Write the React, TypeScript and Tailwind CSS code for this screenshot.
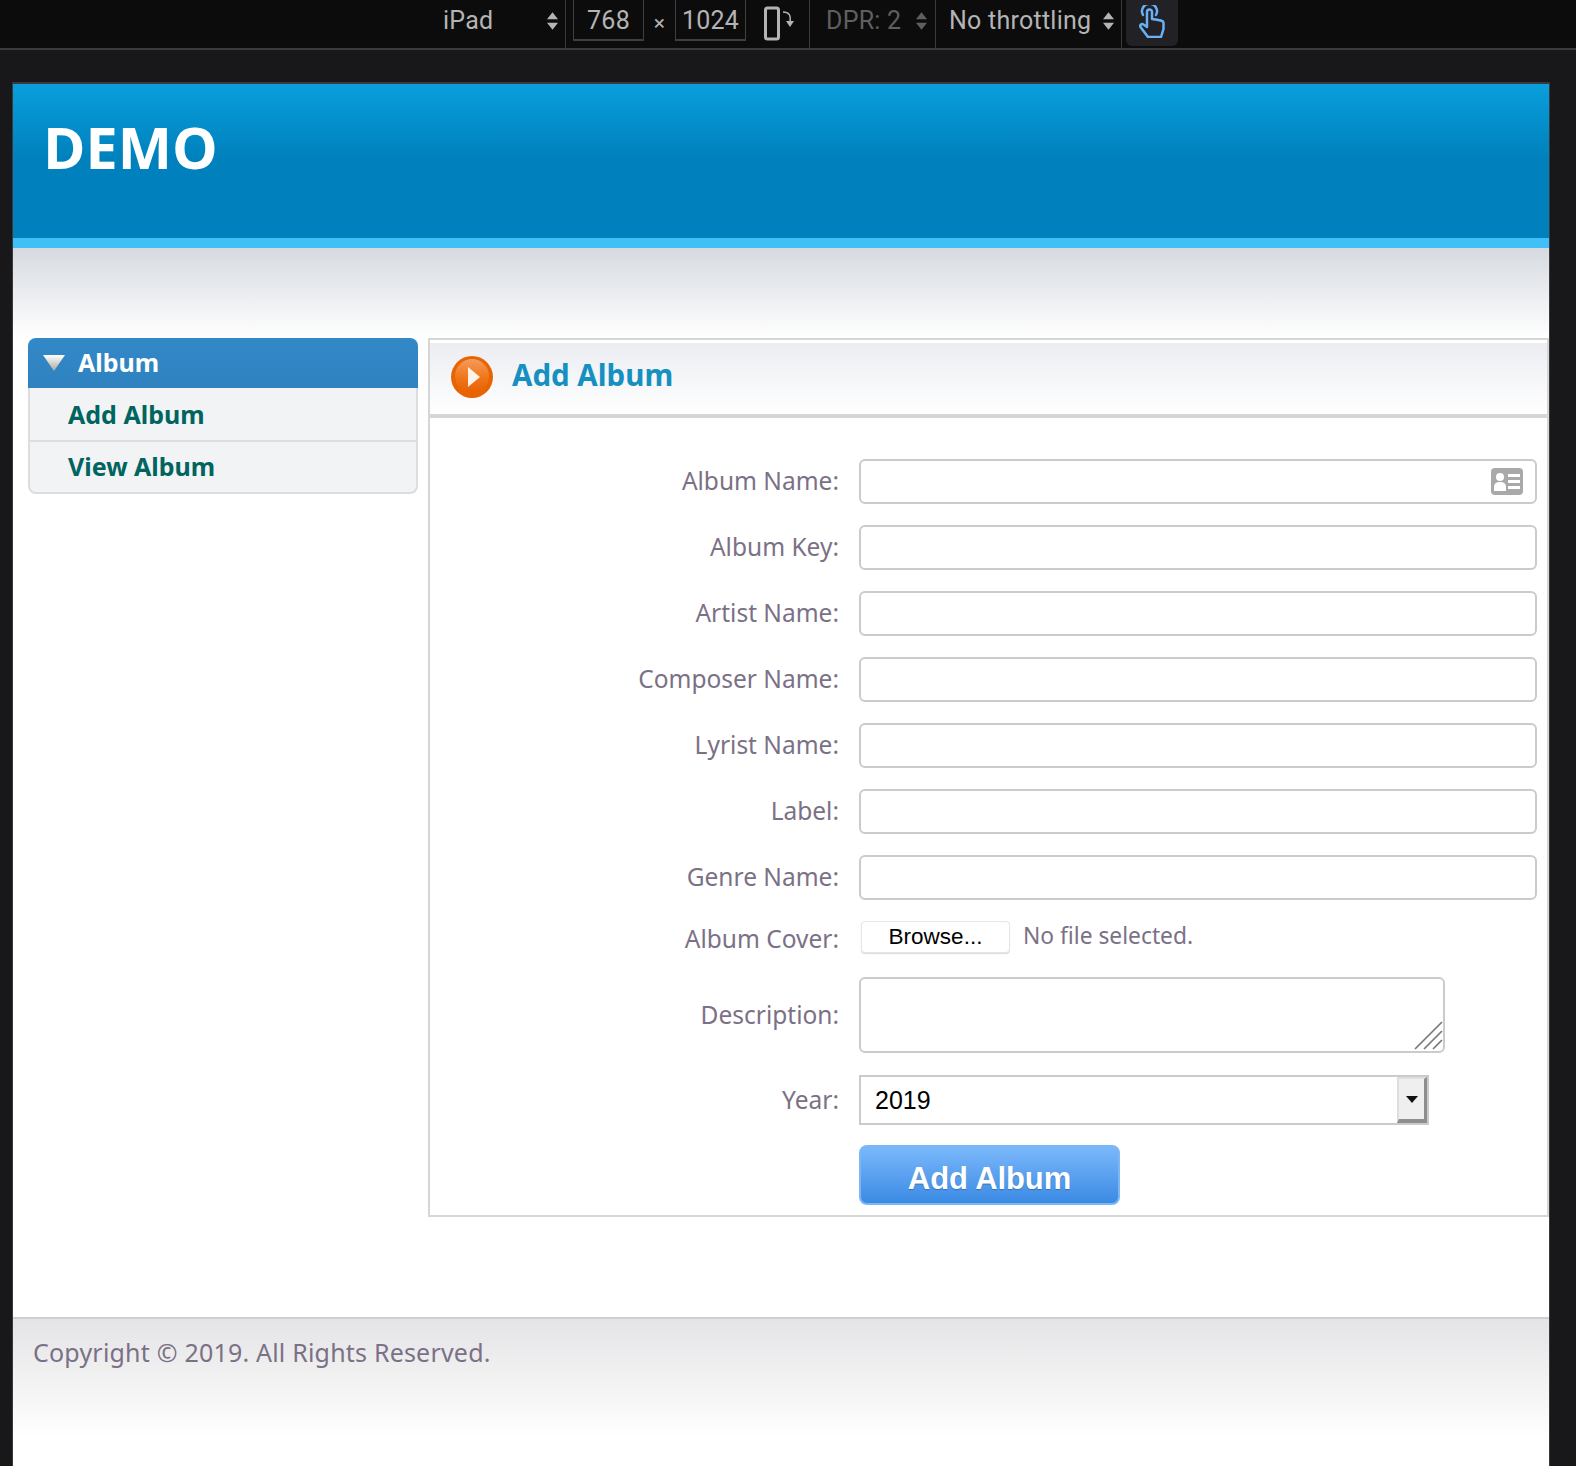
import React from "react";

const fields = ["Album Name:", "Album Key:", "Artist Name:", "Composer Name:", "Lyrist Name:", "Label:", "Genre Name:"];

function UpDown({ className }: { className: string }) {
  return (
    <svg width="11" height="20" viewBox="0 0 10 18" className={className}>
      <path d="M5 1 L10 7.5 H0 Z M0 10.5 H10 L5 17 Z" fill="currentColor" />
    </svg>
  );
}

function Toolbar() {
  return (
    <div className="flex h-[50px] border-b-2 border-[#3a3a3c] bg-[#0c0c0d] font-['Roboto',sans-serif] text-[25px] tracking-[0.25px] text-[#b4b4b4]">
      <div className="ml-[443px] flex w-[122px] items-center justify-between pr-[7px] pb-[6px]">
        <span>iPad</span>
        <UpDown className="text-[#b4b4b4]" />
      </div>
      <div className="flex w-[244px] items-start border-l border-[#3a3a3c]">
        <div className="ml-[7px] flex h-[41px] w-[71px] items-center justify-center border-x border-b-2 border-[#3f3f41] pt-[2px]">768</div>
        <span className="w-[31px] pt-[8px] text-center text-[21px]">×</span>
        <div className="flex h-[41px] w-[71px] items-center justify-center border-x border-b-2 border-[#3f3f41] pt-[2px]">1024</div>
        <svg width="32" height="36" viewBox="0 0 32 36" className="ml-[18px] mt-[6px]">
          <rect x="1.5" y="2" width="13" height="31" rx="2" fill="none" stroke="#b4b4b4" strokeWidth="3" />
          <path d="M19 6 C25 6 27 9 26 16" fill="none" stroke="#b4b4b4" strokeWidth="1.5" />
          <path d="M22 15 H30 L26 21 Z" fill="#b4b4b4" />
        </svg>
      </div>
      <div className="flex w-[126px] items-center justify-between border-l border-[#3a3a3c] pl-[16px] pr-[8px] pb-[6px] text-[#5f5f5f]">
        <span>DPR: 2</span>
        <UpDown className="text-[#5f5f5f]" />
      </div>
      <div className="flex w-[186px] items-center justify-between border-l border-[#3a3a3c] pl-[13px] pr-[7px] pb-[6px]">
        <span>No throttling</span>
        <UpDown className="text-[#b4b4b4]" />
      </div>
      <div className="border-l border-[#3a3a3c] pl-[4px]">
        <div className="flex h-[46px] w-[52px] justify-center rounded-b-md bg-[#222226] pt-[5px]">
          <svg width="26" height="33" viewBox="0 0 26 33" fill="none" stroke="#6ab0f5" strokeWidth="2.5" strokeLinejoin="round" strokeLinecap="round">
            <path d="M4 10 a7.5 7.5 0 1 1 13 0" />
            <path d="M8 22 V7 a2.5 2.5 0 0 1 5 0 V14 l3 0.5 a2 2 0 0 1 1 0 l3 0.8 a2 2 0 0 1 1 0 l2 0.7 a2 2 0 0 1 1.5 2 V24 L22 32 H9 L1.5 22 a2 2 0 0 1 3-2.5 Z" />
          </svg>
        </div>
      </div>
    </div>
  );
}

export default function App() {
  return (
    <div className="min-h-[1466px] overflow-hidden bg-[#18181a]">
      <Toolbar />
      <div className="mx-[12px] mt-[32px] h-[1384px] w-[1538px] border-x border-t-2 border-[#3a3a3c] bg-white">
        {/* Header */}
        <div className="h-[154px] bg-gradient-to-b from-[#0a9fdc] to-[#0080bc] via-[#0080bc] pl-[30px] pt-[29px] font-['Open_Sans',sans-serif] text-[57.5px] leading-[68px] font-bold text-white">
          DEMO
        </div>
        <div className="h-[10px] bg-[#41c0f8]" />
        <div className="h-[90px] bg-gradient-to-b from-[#d6dae0] to-white" />

        <div className="flex pl-[15px] font-['Noto_Sans',sans-serif]">
          {/* Sidebar */}
          <div className="w-[390px] shrink-0">
            <div className="flex h-[50px] items-center rounded-t-lg bg-gradient-to-b from-[#3388c8] to-[#2f82bf] pl-[14px] text-[25px] font-bold text-white">
              <svg width="24" height="18" viewBox="0 0 24 18" className="mr-[12px]">
                <defs>
                  <linearGradient id="tri" x1="0" y1="0" x2="0" y2="1">
                    <stop offset="0" stopColor="#ffffff" />
                    <stop offset="1" stopColor="#a9a99c" />
                  </linearGradient>
                </defs>
                <path d="M1 1 H23 L12 17 Z" fill="url(#tri)" />
              </svg>
              <span className="pb-[1px]">Album</span>
            </div>
            <div className="rounded-b-lg border-x-2 border-b-2 border-[#dcdde0] bg-[#f2f3f5] text-[25px] font-bold text-[#00645f]">
              <div className="flex h-[54px] items-center border-b-2 border-[#dcdde0] pl-[38px] pt-[2px]">Add Album</div>
              <div className="flex h-[50px] items-center pl-[38px]">View Album</div>
            </div>
          </div>

          {/* Content */}
          <div className="ml-[10px] h-[879px] flex-1 border-2 border-[#d6d6d6]">
            <div className="h-[78px] border-b-4 border-[#d6d6d6] pt-[3px]">
              <div className="flex h-[71px] items-center bg-gradient-to-b from-[#ebedf1] to-white pb-[4px] pl-[20px]">
                <svg width="44" height="44" viewBox="0 0 44 44">
                  <defs>
                    <linearGradient id="org" x1="0" y1="0" x2="0" y2="1">
                      <stop offset="0" stopColor="#f59a5c" />
                      <stop offset="0.5" stopColor="#f07a1e" />
                      <stop offset="1" stopColor="#e85f00" />
                    </linearGradient>
                  </defs>
                  <circle cx="22" cy="22" r="21" fill="#e86400" />
                  <circle cx="22" cy="21" r="17" fill="url(#org)" />
                  <path d="M18 12 L30 22 L18 32 Z" fill="#fdf3e8" />
                </svg>
                <span className="ml-[18px] pb-[3px] text-[29.5px] font-bold text-[#1590c0]">Add Album</span>
              </div>
            </div>

            <div className="pt-[41px] text-[24.5px] text-[#7b7186]">
              {fields.map((label, i) => (
                <div key={label} className="mb-[21px] flex h-[45px] items-center">
                  <label className="w-[409px] shrink-0 text-right">{label}</label>
                  <div className="relative ml-[20px] mr-[10px] flex-1">
                    <input className="block h-[45px] w-full rounded-md border-2 border-[#cbcbcb] bg-white outline-none" />
                    {i === 0 && (
                      <svg width="32" height="27" viewBox="0 0 32 27" className="absolute right-[14px] top-[9px]">
                        <rect width="32" height="27" rx="4" fill="#a9a9a9" />
                        <circle cx="9" cy="9" r="4" fill="#fff" />
                        <path d="M3 23 V19 C3 15 6 14 9 14 C12 14 15 15 15 19 V23 Z" fill="#fff" />
                        <path d="M17 6 H29 V9 H17 Z M17 12 H29 V15 H17 Z M17 18 H29 V21 H17 Z" fill="#fff" />
                      </svg>
                    )}
                  </div>
                </div>
              ))}

              <div className="-mt-[1px] flex h-[34px] items-center">
                <label className="w-[409px] shrink-0 pt-[5px] text-right">Album Cover:</label>
                <button className="ml-[22px] h-[32px] w-[149px] rounded-[4px] border border-[#e6e6e6] bg-white font-['Liberation_Sans',sans-serif] text-[22.5px] leading-none text-black shadow-[0_1px_1px_rgba(0,0,0,0.15)]">
                  Browse...
                </button>
                <span className="ml-[13px] pb-[2px] text-[22.8px]">No file selected.</span>
              </div>

              <div className="mt-[23px] flex h-[76px] items-center">
                <label className="w-[409px] shrink-0 text-right">Description:</label>
                <div className="relative ml-[20px] h-[76px] w-[586px]">
                  <textarea className="block h-[76px] w-full resize-none rounded-md border-2 border-[#cbcbcb] bg-white outline-none" />
                  <svg width="29" height="29" viewBox="0 0 29 29" className="absolute bottom-[3px] right-[2px]" stroke="#777" strokeWidth="1.7">
                    <path d="M1 28 L28 1 M10 28 L28 10 M19 28 L28 19" />
                  </svg>
                </div>
              </div>

              <div className="mt-[22px] flex h-[50px] items-center">
                <label className="w-[409px] shrink-0 text-right">Year:</label>
                <div className="ml-[20px] flex h-[50px] w-[570px] items-stretch border-2 border-[#cbcbcb] bg-white font-['Liberation_Sans',sans-serif] text-[25px] text-black">
                  <span className="flex flex-1 items-center pl-[14px] pt-[2px]">2019</span>
                  <div className="flex w-[30px] items-center justify-center border-t-2 border-l-2 border-b-4 border-r-3 border-t-[#dedede] border-l-[#dedede] border-b-[#8e8e8e] border-r-[#8e8e8e] bg-[#efefef]">
                    <svg width="12" height="7" viewBox="0 0 12 7"><path d="M0 0 H12 L6 7 Z" fill="#111" /></svg>
                  </div>
                </div>
              </div>

              <div className="mt-[20px] pl-[429px]">
                <button className="h-[60px] w-[261px] rounded-lg border-2 border-[#7cb6f4] bg-gradient-to-b from-[#7ab8fb] to-[#3a8ae4] pt-[8px] font-['Liberation_Sans',sans-serif] text-[31px] font-bold tracking-[-0.1px] text-white [text-shadow:0_1px_1px_rgba(0,0,0,0.25)]">
                  Add Album
                </button>
              </div>
            </div>
          </div>
        </div>

        {/* Footer */}
        <div className="mt-[100px] h-[150px] border-t-2 border-[#cfcfcf] bg-gradient-to-b from-[#e4e4e6] to-white to-80% pl-[20px] pt-[15px] font-['Noto_Sans',sans-serif] text-[25px] tracking-[0.2px] text-[#7b7186]">
          Copyright © 2019. All Rights Reserved.
        </div>
      </div>
    </div>
  );
}
